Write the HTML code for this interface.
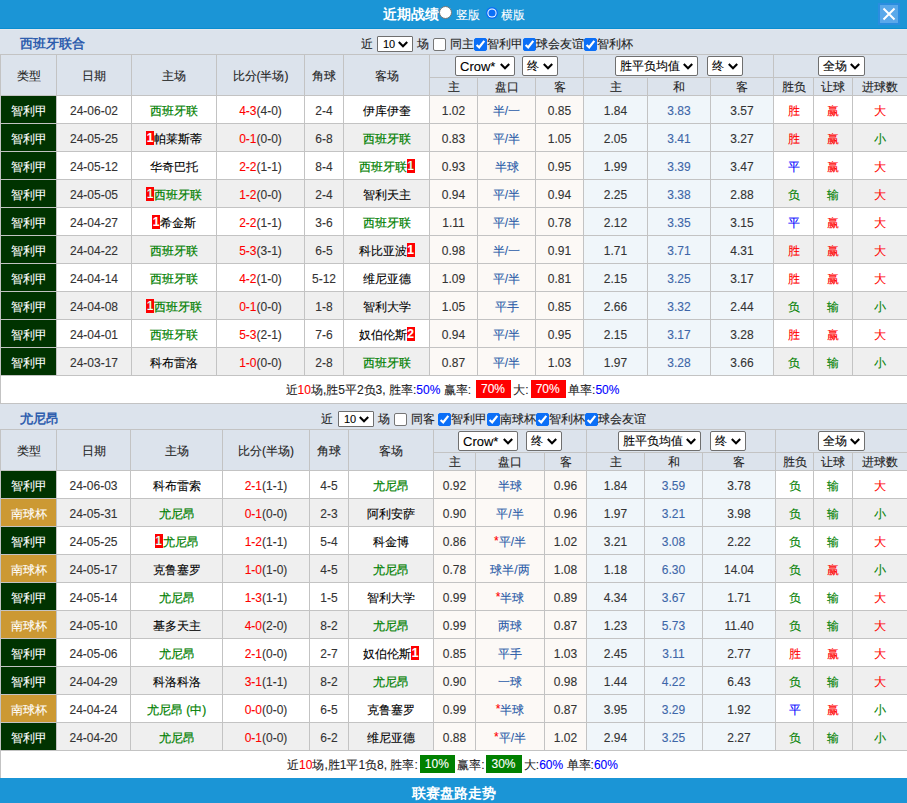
<!DOCTYPE html>
<html><head><meta charset="utf-8"><style>
html,body{margin:0;padding:0;background:#fff;}
body{width:907px;height:803px;overflow:hidden;position:relative;font-family:"Liberation Sans",sans-serif;font-size:12px;color:#000;-webkit-text-stroke:0.1px;}
.r{position:absolute;}
.t{position:absolute;text-align:center;white-space:nowrap;}
.l{position:absolute;white-space:nowrap;}
.sel{position:absolute;background:#fff;border:1px solid #6f6f6f;border-radius:2px;color:#000;}
.cb{position:absolute;width:11px;height:11px;border:1px solid #767676;border-radius:2px;background:#fff;}
.cb.on{background:#0b6ff7;border-color:#0b6ff7;}
.bd{display:inline-block;background:#f00;color:#fff;font-weight:bold;width:8px;height:14px;line-height:14px;text-align:center;vertical-align:middle;margin-top:-2px;position:relative;top:-1px}
.bx{position:relative;top:-1px;display:inline-block;color:#fff;padding:0 6px 0 5px;margin:0 -1px 0 2px;height:18px;line-height:18px;}
</style></head><body>
<div class="r" style="left:0px;top:0px;width:907px;height:28px;background:#1b95d6;"></div>
<div class="r" style="left:0px;top:28px;width:907px;height:1px;background:#0a8dd0;"></div>
<div class="l" style="left:383px;top:0px;height:28px;line-height:28px;color:#fff;font-weight:bold;font-size:14px;-webkit-text-stroke:0">近期战绩</div>
<div class="r" style="left:439px;top:6px;width:11px;height:11px;border-radius:50%;background:#fff;border:1px solid #777"></div>
<div class="l" style="left:456px;top:1px;height:28px;line-height:28px;color:#fff;font-size:12px">竖版</div>
<svg width="14" height="14" viewBox="0 0 14 14" style="position:absolute;left:484.5px;top:5.5px"><circle cx="7" cy="7" r="6" fill="#0b6ff7"/><circle cx="7" cy="7" r="4.6" fill="#fff"/><circle cx="7" cy="7" r="3.6" fill="#0b6ff7"/></svg>
<div class="l" style="left:501px;top:1px;height:28px;line-height:28px;color:#fff;font-size:12px">横版</div>
<div class="r" style="left:878px;top:3px;width:22px;height:22px;background:#2a8de0;"></div>
<div class="r" style="left:880px;top:5px;width:18px;height:18px;background:#5aa8ea;"></div>
<svg width="18" height="18" viewBox="0 0 18 18" style="position:absolute;left:880px;top:5px"><path d="M3.5 3.5 L14.5 14.5 M14.5 3.5 L3.5 14.5" stroke="#fff" stroke-width="2"/></svg>
<div class="r" style="left:0px;top:29px;width:907px;height:25px;background:#dce3ec;"></div>
<div class="l" style="left:20px;top:31px;height:25px;line-height:25px;color:#2f5eae;font-weight:bold;font-size:13px;-webkit-text-stroke:0">西班牙联合</div>
<div class="l" style="left:361px;top:32px;height:25px;line-height:25px;font-size:12px;color:#222">近</div>
<div class="sel" style="left:377px;top:36px;width:34px;height:14px;border-radius:1px"><span style="position:absolute;left:5px;top:0px;line-height:14px;font-size:11px;font-family:"Liberation Serif",serif">10</span><svg width="10" height="7" viewBox="0 0 10 7" style="position:absolute;right:4px;top:4px"><path d="M0.8 1 L5 5.2 L9.2 1" fill="none" stroke="#000" stroke-width="2.1"/></svg></div>
<div class="l" style="left:417px;top:32px;height:25px;line-height:25px;font-size:12px;color:#222">场</div>
<div class="cb" style="left:433px;top:38px"></div>
<div class="l" style="left:450px;top:32px;height:25px;line-height:25px;font-size:12px;color:#222">同主</div>
<div class="cb on" style="left:474px;top:38px"><svg width="13" height="13" viewBox="0 0 13 13" style="position:absolute;left:-1px;top:-1px"><path d="M2.6 7.0 L5.2 9.3 L10.3 2.9" fill="none" stroke="#fff" stroke-width="2.2"/></svg></div>
<div class="l" style="left:487px;top:32px;height:25px;line-height:25px;font-size:12px;color:#222">智利甲</div>
<div class="cb on" style="left:523px;top:38px"><svg width="13" height="13" viewBox="0 0 13 13" style="position:absolute;left:-1px;top:-1px"><path d="M2.6 7.0 L5.2 9.3 L10.3 2.9" fill="none" stroke="#fff" stroke-width="2.2"/></svg></div>
<div class="l" style="left:536px;top:32px;height:25px;line-height:25px;font-size:12px;color:#222">球会友谊</div>
<div class="cb on" style="left:584px;top:38px"><svg width="13" height="13" viewBox="0 0 13 13" style="position:absolute;left:-1px;top:-1px"><path d="M2.6 7.0 L5.2 9.3 L10.3 2.9" fill="none" stroke="#fff" stroke-width="2.2"/></svg></div>
<div class="l" style="left:597px;top:32px;height:25px;line-height:25px;font-size:12px;color:#222">智利杯</div>
<div class="r" style="left:0px;top:54px;width:907px;height:1px;background:#c3c3c3;"></div>
<div class="r" style="left:0px;top:55px;width:907px;height:40px;background:#dce3ec;"></div>
<div class="r" style="left:0px;top:95px;width:907px;height:1px;background:#c3c3c3;"></div>
<div class="r" style="left:0px;top:96px;width:907px;height:27px;background:#fff;"></div>
<div class="r" style="left:430px;top:96px;width:153px;height:27px;background:#fcf9f6;"></div>
<div class="r" style="left:584px;top:96px;width:189px;height:27px;background:#f0f6fa;"></div>
<div class="r" style="left:0px;top:123px;width:907px;height:1px;background:#c3c3c3;"></div>
<div class="r" style="left:0px;top:124px;width:907px;height:27px;background:#efefef;"></div>
<div class="r" style="left:430px;top:124px;width:153px;height:27px;background:#fcf9f6;"></div>
<div class="r" style="left:584px;top:124px;width:189px;height:27px;background:#f0f6fa;"></div>
<div class="r" style="left:0px;top:151px;width:907px;height:1px;background:#c3c3c3;"></div>
<div class="r" style="left:0px;top:152px;width:907px;height:27px;background:#fff;"></div>
<div class="r" style="left:430px;top:152px;width:153px;height:27px;background:#fcf9f6;"></div>
<div class="r" style="left:584px;top:152px;width:189px;height:27px;background:#f0f6fa;"></div>
<div class="r" style="left:0px;top:179px;width:907px;height:1px;background:#c3c3c3;"></div>
<div class="r" style="left:0px;top:180px;width:907px;height:27px;background:#efefef;"></div>
<div class="r" style="left:430px;top:180px;width:153px;height:27px;background:#fcf9f6;"></div>
<div class="r" style="left:584px;top:180px;width:189px;height:27px;background:#f0f6fa;"></div>
<div class="r" style="left:0px;top:207px;width:907px;height:1px;background:#c3c3c3;"></div>
<div class="r" style="left:0px;top:208px;width:907px;height:27px;background:#fff;"></div>
<div class="r" style="left:430px;top:208px;width:153px;height:27px;background:#fcf9f6;"></div>
<div class="r" style="left:584px;top:208px;width:189px;height:27px;background:#f0f6fa;"></div>
<div class="r" style="left:0px;top:235px;width:907px;height:1px;background:#c3c3c3;"></div>
<div class="r" style="left:0px;top:236px;width:907px;height:27px;background:#efefef;"></div>
<div class="r" style="left:430px;top:236px;width:153px;height:27px;background:#fcf9f6;"></div>
<div class="r" style="left:584px;top:236px;width:189px;height:27px;background:#f0f6fa;"></div>
<div class="r" style="left:0px;top:263px;width:907px;height:1px;background:#c3c3c3;"></div>
<div class="r" style="left:0px;top:264px;width:907px;height:27px;background:#fff;"></div>
<div class="r" style="left:430px;top:264px;width:153px;height:27px;background:#fcf9f6;"></div>
<div class="r" style="left:584px;top:264px;width:189px;height:27px;background:#f0f6fa;"></div>
<div class="r" style="left:0px;top:291px;width:907px;height:1px;background:#c3c3c3;"></div>
<div class="r" style="left:0px;top:292px;width:907px;height:27px;background:#efefef;"></div>
<div class="r" style="left:430px;top:292px;width:153px;height:27px;background:#fcf9f6;"></div>
<div class="r" style="left:584px;top:292px;width:189px;height:27px;background:#f0f6fa;"></div>
<div class="r" style="left:0px;top:319px;width:907px;height:1px;background:#c3c3c3;"></div>
<div class="r" style="left:0px;top:320px;width:907px;height:27px;background:#fff;"></div>
<div class="r" style="left:430px;top:320px;width:153px;height:27px;background:#fcf9f6;"></div>
<div class="r" style="left:584px;top:320px;width:189px;height:27px;background:#f0f6fa;"></div>
<div class="r" style="left:0px;top:347px;width:907px;height:1px;background:#c3c3c3;"></div>
<div class="r" style="left:0px;top:348px;width:907px;height:27px;background:#efefef;"></div>
<div class="r" style="left:430px;top:348px;width:153px;height:27px;background:#fcf9f6;"></div>
<div class="r" style="left:584px;top:348px;width:189px;height:27px;background:#f0f6fa;"></div>
<div class="r" style="left:0px;top:375px;width:907px;height:1px;background:#c3c3c3;"></div>
<div class="r" style="left:0px;top:376px;width:907px;height:27px;background:#fff;"></div>
<div class="r" style="left:0px;top:403px;width:907px;height:1px;background:#c3c3c3;"></div>
<div class="r" style="left:0px;top:54px;width:1px;height:349px;background:#c3c3c3;"></div>
<div class="r" style="left:56px;top:55px;width:1px;height:320px;background:#c3c3c3;"></div>
<div class="r" style="left:131px;top:55px;width:1px;height:320px;background:#c3c3c3;"></div>
<div class="r" style="left:216px;top:55px;width:1px;height:320px;background:#c3c3c3;"></div>
<div class="r" style="left:304px;top:55px;width:1px;height:320px;background:#c3c3c3;"></div>
<div class="r" style="left:343px;top:55px;width:1px;height:320px;background:#c3c3c3;"></div>
<div class="r" style="left:429px;top:55px;width:1px;height:320px;background:#c3c3c3;"></div>
<div class="r" style="left:477px;top:77px;width:1px;height:299px;background:#c3c3c3;"></div>
<div class="r" style="left:535px;top:77px;width:1px;height:299px;background:#c3c3c3;"></div>
<div class="r" style="left:583px;top:55px;width:1px;height:320px;background:#c3c3c3;"></div>
<div class="r" style="left:647px;top:77px;width:1px;height:299px;background:#c3c3c3;"></div>
<div class="r" style="left:710px;top:77px;width:1px;height:299px;background:#c3c3c3;"></div>
<div class="r" style="left:773px;top:55px;width:1px;height:320px;background:#c3c3c3;"></div>
<div class="r" style="left:813px;top:77px;width:1px;height:299px;background:#c3c3c3;"></div>
<div class="r" style="left:852px;top:77px;width:1px;height:299px;background:#c3c3c3;"></div>
<div class="r" style="left:429px;top:77px;width:478px;height:1px;background:#c3c3c3;"></div>
<div class="t" style="left:1px;top:56px;width:55px;height:40px;line-height:40px;color:#222">类型</div>
<div class="t" style="left:57px;top:56px;width:74px;height:40px;line-height:40px;color:#222">日期</div>
<div class="t" style="left:132px;top:56px;width:84px;height:40px;line-height:40px;color:#222">主场</div>
<div class="t" style="left:217px;top:56px;width:87px;height:40px;line-height:40px;color:#222">比分(半场)</div>
<div class="t" style="left:305px;top:56px;width:38px;height:40px;line-height:40px;color:#222">角球</div>
<div class="t" style="left:344px;top:56px;width:85px;height:40px;line-height:40px;color:#222">客场</div>
<div class="t" style="left:430px;top:79px;width:47px;height:17px;line-height:17px;color:#222">主</div>
<div class="t" style="left:478px;top:79px;width:57px;height:17px;line-height:17px;color:#222">盘口</div>
<div class="t" style="left:536px;top:79px;width:47px;height:17px;line-height:17px;color:#222">客</div>
<div class="t" style="left:584px;top:79px;width:63px;height:17px;line-height:17px;color:#222">主</div>
<div class="t" style="left:648px;top:79px;width:62px;height:17px;line-height:17px;color:#222">和</div>
<div class="t" style="left:711px;top:79px;width:62px;height:17px;line-height:17px;color:#222">客</div>
<div class="t" style="left:774px;top:79px;width:39px;height:17px;line-height:17px;color:#222">胜负</div>
<div class="t" style="left:814px;top:79px;width:38px;height:17px;line-height:17px;color:#222">让球</div>
<div class="t" style="left:853px;top:79px;width:54px;height:17px;line-height:17px;color:#222">进球数</div>
<div class="sel" style="left:455px;top:56px;width:58px;height:18px;border-radius:2px"><span style="position:absolute;left:4px;top:1px;line-height:18px;font-size:13px;">Crow*</span><svg width="10" height="7" viewBox="0 0 10 7" style="position:absolute;right:4px;top:6px"><path d="M0.8 1 L5 5.2 L9.2 1" fill="none" stroke="#000" stroke-width="2.1"/></svg></div>
<div class="sel" style="left:522px;top:56px;width:34px;height:18px;border-radius:2px"><span style="position:absolute;left:4px;top:0px;line-height:18px;font-size:12px;">终</span><svg width="10" height="7" viewBox="0 0 10 7" style="position:absolute;right:4px;top:6px"><path d="M0.8 1 L5 5.2 L9.2 1" fill="none" stroke="#000" stroke-width="2.1"/></svg></div>
<div class="sel" style="left:615px;top:56px;width:81px;height:18px;border-radius:2px"><span style="position:absolute;left:4px;top:0px;line-height:18px;font-size:12px;">胜平负均值</span><svg width="10" height="7" viewBox="0 0 10 7" style="position:absolute;right:4px;top:6px"><path d="M0.8 1 L5 5.2 L9.2 1" fill="none" stroke="#000" stroke-width="2.1"/></svg></div>
<div class="sel" style="left:707px;top:56px;width:34px;height:18px;border-radius:2px"><span style="position:absolute;left:4px;top:0px;line-height:18px;font-size:12px;">终</span><svg width="10" height="7" viewBox="0 0 10 7" style="position:absolute;right:4px;top:6px"><path d="M0.8 1 L5 5.2 L9.2 1" fill="none" stroke="#000" stroke-width="2.1"/></svg></div>
<div class="sel" style="left:818px;top:56px;width:45px;height:18px;border-radius:2px"><span style="position:absolute;left:4px;top:0px;line-height:18px;font-size:12px;">全场</span><svg width="10" height="7" viewBox="0 0 10 7" style="position:absolute;right:4px;top:6px"><path d="M0.8 1 L5 5.2 L9.2 1" fill="none" stroke="#000" stroke-width="2.1"/></svg></div>
<div class="r" style="left:1px;top:96px;width:55px;height:27px;background:#003300;"></div>
<div class="t" style="left:1px;top:98px;width:55px;height:27px;line-height:27px;color:#fff">智利甲</div>
<div class="t" style="left:57px;top:98px;width:74px;height:27px;line-height:27px;color:#333">24-06-02</div>
<div class="t" style="left:132px;top:98px;width:84px;height:27px;line-height:27px;"><span style="color:#008000;-webkit-text-stroke:0.2px #008000">西班牙联</span></div>
<div class="t" style="left:217px;top:98px;width:87px;height:27px;line-height:27px;color:#333"><span style="color:#ff0000">4-3</span>(4-0)</div>
<div class="t" style="left:305px;top:98px;width:38px;height:27px;line-height:27px;color:#333">2-4</div>
<div class="t" style="left:344px;top:98px;width:85px;height:27px;line-height:27px;"><span style="color:#000">伊库伊奎</span></div>
<div class="t" style="left:430px;top:98px;width:47px;height:27px;line-height:27px;color:#333">1.02</div>
<div class="t" style="left:478px;top:98px;width:57px;height:27px;line-height:27px;color:#2a5ba8">半/一</div>
<div class="t" style="left:536px;top:98px;width:47px;height:27px;line-height:27px;color:#333">0.85</div>
<div class="t" style="left:584px;top:98px;width:63px;height:27px;line-height:27px;color:#333">1.84</div>
<div class="t" style="left:648px;top:98px;width:62px;height:27px;line-height:27px;color:#3d66a8">3.83</div>
<div class="t" style="left:711px;top:98px;width:62px;height:27px;line-height:27px;color:#333">3.57</div>
<div class="t" style="left:774px;top:98px;width:39px;height:27px;line-height:27px;color:#ff0000">胜</div>
<div class="t" style="left:814px;top:98px;width:38px;height:27px;line-height:27px;color:#ff0000">赢</div>
<div class="t" style="left:853px;top:98px;width:54px;height:27px;line-height:27px;color:#ff0000">大</div>
<div class="r" style="left:1px;top:124px;width:55px;height:27px;background:#003300;"></div>
<div class="t" style="left:1px;top:126px;width:55px;height:27px;line-height:27px;color:#fff">智利甲</div>
<div class="t" style="left:57px;top:126px;width:74px;height:27px;line-height:27px;color:#333">24-05-25</div>
<div class="t" style="left:132px;top:126px;width:84px;height:27px;line-height:27px;"><span style="color:#000"><span class="bd">1</span>帕莱斯蒂</span></div>
<div class="t" style="left:217px;top:126px;width:87px;height:27px;line-height:27px;color:#333"><span style="color:#ff0000">0-1</span>(0-0)</div>
<div class="t" style="left:305px;top:126px;width:38px;height:27px;line-height:27px;color:#333">6-8</div>
<div class="t" style="left:344px;top:126px;width:85px;height:27px;line-height:27px;"><span style="color:#008000;-webkit-text-stroke:0.2px #008000">西班牙联</span></div>
<div class="t" style="left:430px;top:126px;width:47px;height:27px;line-height:27px;color:#333">0.83</div>
<div class="t" style="left:478px;top:126px;width:57px;height:27px;line-height:27px;color:#2a5ba8">平/半</div>
<div class="t" style="left:536px;top:126px;width:47px;height:27px;line-height:27px;color:#333">1.05</div>
<div class="t" style="left:584px;top:126px;width:63px;height:27px;line-height:27px;color:#333">2.05</div>
<div class="t" style="left:648px;top:126px;width:62px;height:27px;line-height:27px;color:#3d66a8">3.41</div>
<div class="t" style="left:711px;top:126px;width:62px;height:27px;line-height:27px;color:#333">3.27</div>
<div class="t" style="left:774px;top:126px;width:39px;height:27px;line-height:27px;color:#ff0000">胜</div>
<div class="t" style="left:814px;top:126px;width:38px;height:27px;line-height:27px;color:#ff0000">赢</div>
<div class="t" style="left:853px;top:126px;width:54px;height:27px;line-height:27px;color:#008000">小</div>
<div class="r" style="left:1px;top:152px;width:55px;height:27px;background:#003300;"></div>
<div class="t" style="left:1px;top:154px;width:55px;height:27px;line-height:27px;color:#fff">智利甲</div>
<div class="t" style="left:57px;top:154px;width:74px;height:27px;line-height:27px;color:#333">24-05-12</div>
<div class="t" style="left:132px;top:154px;width:84px;height:27px;line-height:27px;"><span style="color:#000">华奇巴托</span></div>
<div class="t" style="left:217px;top:154px;width:87px;height:27px;line-height:27px;color:#333"><span style="color:#ff0000">2-2</span>(1-1)</div>
<div class="t" style="left:305px;top:154px;width:38px;height:27px;line-height:27px;color:#333">8-4</div>
<div class="t" style="left:344px;top:154px;width:85px;height:27px;line-height:27px;"><span style="color:#008000;-webkit-text-stroke:0.2px #008000">西班牙联<span class="bd">1</span></span></div>
<div class="t" style="left:430px;top:154px;width:47px;height:27px;line-height:27px;color:#333">0.93</div>
<div class="t" style="left:478px;top:154px;width:57px;height:27px;line-height:27px;color:#2a5ba8">半球</div>
<div class="t" style="left:536px;top:154px;width:47px;height:27px;line-height:27px;color:#333">0.95</div>
<div class="t" style="left:584px;top:154px;width:63px;height:27px;line-height:27px;color:#333">1.99</div>
<div class="t" style="left:648px;top:154px;width:62px;height:27px;line-height:27px;color:#3d66a8">3.39</div>
<div class="t" style="left:711px;top:154px;width:62px;height:27px;line-height:27px;color:#333">3.47</div>
<div class="t" style="left:774px;top:154px;width:39px;height:27px;line-height:27px;color:#0000ff">平</div>
<div class="t" style="left:814px;top:154px;width:38px;height:27px;line-height:27px;color:#ff0000">赢</div>
<div class="t" style="left:853px;top:154px;width:54px;height:27px;line-height:27px;color:#ff0000">大</div>
<div class="r" style="left:1px;top:180px;width:55px;height:27px;background:#003300;"></div>
<div class="t" style="left:1px;top:182px;width:55px;height:27px;line-height:27px;color:#fff">智利甲</div>
<div class="t" style="left:57px;top:182px;width:74px;height:27px;line-height:27px;color:#333">24-05-05</div>
<div class="t" style="left:132px;top:182px;width:84px;height:27px;line-height:27px;"><span style="color:#008000;-webkit-text-stroke:0.2px #008000"><span class="bd">1</span>西班牙联</span></div>
<div class="t" style="left:217px;top:182px;width:87px;height:27px;line-height:27px;color:#333"><span style="color:#ff0000">1-2</span>(0-0)</div>
<div class="t" style="left:305px;top:182px;width:38px;height:27px;line-height:27px;color:#333">2-4</div>
<div class="t" style="left:344px;top:182px;width:85px;height:27px;line-height:27px;"><span style="color:#000">智利天主</span></div>
<div class="t" style="left:430px;top:182px;width:47px;height:27px;line-height:27px;color:#333">0.94</div>
<div class="t" style="left:478px;top:182px;width:57px;height:27px;line-height:27px;color:#2a5ba8">平/半</div>
<div class="t" style="left:536px;top:182px;width:47px;height:27px;line-height:27px;color:#333">0.94</div>
<div class="t" style="left:584px;top:182px;width:63px;height:27px;line-height:27px;color:#333">2.25</div>
<div class="t" style="left:648px;top:182px;width:62px;height:27px;line-height:27px;color:#3d66a8">3.38</div>
<div class="t" style="left:711px;top:182px;width:62px;height:27px;line-height:27px;color:#333">2.88</div>
<div class="t" style="left:774px;top:182px;width:39px;height:27px;line-height:27px;color:#008000">负</div>
<div class="t" style="left:814px;top:182px;width:38px;height:27px;line-height:27px;color:#008000">输</div>
<div class="t" style="left:853px;top:182px;width:54px;height:27px;line-height:27px;color:#ff0000">大</div>
<div class="r" style="left:1px;top:208px;width:55px;height:27px;background:#003300;"></div>
<div class="t" style="left:1px;top:210px;width:55px;height:27px;line-height:27px;color:#fff">智利甲</div>
<div class="t" style="left:57px;top:210px;width:74px;height:27px;line-height:27px;color:#333">24-04-27</div>
<div class="t" style="left:132px;top:210px;width:84px;height:27px;line-height:27px;"><span style="color:#000"><span class="bd">1</span>希金斯</span></div>
<div class="t" style="left:217px;top:210px;width:87px;height:27px;line-height:27px;color:#333"><span style="color:#ff0000">2-2</span>(1-1)</div>
<div class="t" style="left:305px;top:210px;width:38px;height:27px;line-height:27px;color:#333">3-6</div>
<div class="t" style="left:344px;top:210px;width:85px;height:27px;line-height:27px;"><span style="color:#008000;-webkit-text-stroke:0.2px #008000">西班牙联</span></div>
<div class="t" style="left:430px;top:210px;width:47px;height:27px;line-height:27px;color:#333">1.11</div>
<div class="t" style="left:478px;top:210px;width:57px;height:27px;line-height:27px;color:#2a5ba8">平/半</div>
<div class="t" style="left:536px;top:210px;width:47px;height:27px;line-height:27px;color:#333">0.78</div>
<div class="t" style="left:584px;top:210px;width:63px;height:27px;line-height:27px;color:#333">2.12</div>
<div class="t" style="left:648px;top:210px;width:62px;height:27px;line-height:27px;color:#3d66a8">3.35</div>
<div class="t" style="left:711px;top:210px;width:62px;height:27px;line-height:27px;color:#333">3.15</div>
<div class="t" style="left:774px;top:210px;width:39px;height:27px;line-height:27px;color:#0000ff">平</div>
<div class="t" style="left:814px;top:210px;width:38px;height:27px;line-height:27px;color:#ff0000">赢</div>
<div class="t" style="left:853px;top:210px;width:54px;height:27px;line-height:27px;color:#ff0000">大</div>
<div class="r" style="left:1px;top:236px;width:55px;height:27px;background:#003300;"></div>
<div class="t" style="left:1px;top:238px;width:55px;height:27px;line-height:27px;color:#fff">智利甲</div>
<div class="t" style="left:57px;top:238px;width:74px;height:27px;line-height:27px;color:#333">24-04-22</div>
<div class="t" style="left:132px;top:238px;width:84px;height:27px;line-height:27px;"><span style="color:#008000;-webkit-text-stroke:0.2px #008000">西班牙联</span></div>
<div class="t" style="left:217px;top:238px;width:87px;height:27px;line-height:27px;color:#333"><span style="color:#ff0000">5-3</span>(3-1)</div>
<div class="t" style="left:305px;top:238px;width:38px;height:27px;line-height:27px;color:#333">6-5</div>
<div class="t" style="left:344px;top:238px;width:85px;height:27px;line-height:27px;"><span style="color:#000">科比亚波<span class="bd">1</span></span></div>
<div class="t" style="left:430px;top:238px;width:47px;height:27px;line-height:27px;color:#333">0.98</div>
<div class="t" style="left:478px;top:238px;width:57px;height:27px;line-height:27px;color:#2a5ba8">半/一</div>
<div class="t" style="left:536px;top:238px;width:47px;height:27px;line-height:27px;color:#333">0.91</div>
<div class="t" style="left:584px;top:238px;width:63px;height:27px;line-height:27px;color:#333">1.71</div>
<div class="t" style="left:648px;top:238px;width:62px;height:27px;line-height:27px;color:#3d66a8">3.71</div>
<div class="t" style="left:711px;top:238px;width:62px;height:27px;line-height:27px;color:#333">4.31</div>
<div class="t" style="left:774px;top:238px;width:39px;height:27px;line-height:27px;color:#ff0000">胜</div>
<div class="t" style="left:814px;top:238px;width:38px;height:27px;line-height:27px;color:#ff0000">赢</div>
<div class="t" style="left:853px;top:238px;width:54px;height:27px;line-height:27px;color:#ff0000">大</div>
<div class="r" style="left:1px;top:264px;width:55px;height:27px;background:#003300;"></div>
<div class="t" style="left:1px;top:266px;width:55px;height:27px;line-height:27px;color:#fff">智利甲</div>
<div class="t" style="left:57px;top:266px;width:74px;height:27px;line-height:27px;color:#333">24-04-14</div>
<div class="t" style="left:132px;top:266px;width:84px;height:27px;line-height:27px;"><span style="color:#008000;-webkit-text-stroke:0.2px #008000">西班牙联</span></div>
<div class="t" style="left:217px;top:266px;width:87px;height:27px;line-height:27px;color:#333"><span style="color:#ff0000">4-2</span>(1-0)</div>
<div class="t" style="left:305px;top:266px;width:38px;height:27px;line-height:27px;color:#333">5-12</div>
<div class="t" style="left:344px;top:266px;width:85px;height:27px;line-height:27px;"><span style="color:#000">维尼亚德</span></div>
<div class="t" style="left:430px;top:266px;width:47px;height:27px;line-height:27px;color:#333">1.09</div>
<div class="t" style="left:478px;top:266px;width:57px;height:27px;line-height:27px;color:#2a5ba8">平/半</div>
<div class="t" style="left:536px;top:266px;width:47px;height:27px;line-height:27px;color:#333">0.81</div>
<div class="t" style="left:584px;top:266px;width:63px;height:27px;line-height:27px;color:#333">2.15</div>
<div class="t" style="left:648px;top:266px;width:62px;height:27px;line-height:27px;color:#3d66a8">3.25</div>
<div class="t" style="left:711px;top:266px;width:62px;height:27px;line-height:27px;color:#333">3.17</div>
<div class="t" style="left:774px;top:266px;width:39px;height:27px;line-height:27px;color:#ff0000">胜</div>
<div class="t" style="left:814px;top:266px;width:38px;height:27px;line-height:27px;color:#ff0000">赢</div>
<div class="t" style="left:853px;top:266px;width:54px;height:27px;line-height:27px;color:#ff0000">大</div>
<div class="r" style="left:1px;top:292px;width:55px;height:27px;background:#003300;"></div>
<div class="t" style="left:1px;top:294px;width:55px;height:27px;line-height:27px;color:#fff">智利甲</div>
<div class="t" style="left:57px;top:294px;width:74px;height:27px;line-height:27px;color:#333">24-04-08</div>
<div class="t" style="left:132px;top:294px;width:84px;height:27px;line-height:27px;"><span style="color:#008000;-webkit-text-stroke:0.2px #008000"><span class="bd">1</span>西班牙联</span></div>
<div class="t" style="left:217px;top:294px;width:87px;height:27px;line-height:27px;color:#333"><span style="color:#ff0000">0-1</span>(0-0)</div>
<div class="t" style="left:305px;top:294px;width:38px;height:27px;line-height:27px;color:#333">1-8</div>
<div class="t" style="left:344px;top:294px;width:85px;height:27px;line-height:27px;"><span style="color:#000">智利大学</span></div>
<div class="t" style="left:430px;top:294px;width:47px;height:27px;line-height:27px;color:#333">1.05</div>
<div class="t" style="left:478px;top:294px;width:57px;height:27px;line-height:27px;color:#2a5ba8">平手</div>
<div class="t" style="left:536px;top:294px;width:47px;height:27px;line-height:27px;color:#333">0.85</div>
<div class="t" style="left:584px;top:294px;width:63px;height:27px;line-height:27px;color:#333">2.66</div>
<div class="t" style="left:648px;top:294px;width:62px;height:27px;line-height:27px;color:#3d66a8">3.32</div>
<div class="t" style="left:711px;top:294px;width:62px;height:27px;line-height:27px;color:#333">2.44</div>
<div class="t" style="left:774px;top:294px;width:39px;height:27px;line-height:27px;color:#008000">负</div>
<div class="t" style="left:814px;top:294px;width:38px;height:27px;line-height:27px;color:#008000">输</div>
<div class="t" style="left:853px;top:294px;width:54px;height:27px;line-height:27px;color:#008000">小</div>
<div class="r" style="left:1px;top:320px;width:55px;height:27px;background:#003300;"></div>
<div class="t" style="left:1px;top:322px;width:55px;height:27px;line-height:27px;color:#fff">智利甲</div>
<div class="t" style="left:57px;top:322px;width:74px;height:27px;line-height:27px;color:#333">24-04-01</div>
<div class="t" style="left:132px;top:322px;width:84px;height:27px;line-height:27px;"><span style="color:#008000;-webkit-text-stroke:0.2px #008000">西班牙联</span></div>
<div class="t" style="left:217px;top:322px;width:87px;height:27px;line-height:27px;color:#333"><span style="color:#ff0000">5-3</span>(2-1)</div>
<div class="t" style="left:305px;top:322px;width:38px;height:27px;line-height:27px;color:#333">7-6</div>
<div class="t" style="left:344px;top:322px;width:85px;height:27px;line-height:27px;"><span style="color:#000">奴伯伦斯<span class="bd">2</span></span></div>
<div class="t" style="left:430px;top:322px;width:47px;height:27px;line-height:27px;color:#333">0.94</div>
<div class="t" style="left:478px;top:322px;width:57px;height:27px;line-height:27px;color:#2a5ba8">平/半</div>
<div class="t" style="left:536px;top:322px;width:47px;height:27px;line-height:27px;color:#333">0.95</div>
<div class="t" style="left:584px;top:322px;width:63px;height:27px;line-height:27px;color:#333">2.15</div>
<div class="t" style="left:648px;top:322px;width:62px;height:27px;line-height:27px;color:#3d66a8">3.17</div>
<div class="t" style="left:711px;top:322px;width:62px;height:27px;line-height:27px;color:#333">3.28</div>
<div class="t" style="left:774px;top:322px;width:39px;height:27px;line-height:27px;color:#ff0000">胜</div>
<div class="t" style="left:814px;top:322px;width:38px;height:27px;line-height:27px;color:#ff0000">赢</div>
<div class="t" style="left:853px;top:322px;width:54px;height:27px;line-height:27px;color:#ff0000">大</div>
<div class="r" style="left:1px;top:348px;width:55px;height:27px;background:#003300;"></div>
<div class="t" style="left:1px;top:350px;width:55px;height:27px;line-height:27px;color:#fff">智利甲</div>
<div class="t" style="left:57px;top:350px;width:74px;height:27px;line-height:27px;color:#333">24-03-17</div>
<div class="t" style="left:132px;top:350px;width:84px;height:27px;line-height:27px;"><span style="color:#000">科布雷洛</span></div>
<div class="t" style="left:217px;top:350px;width:87px;height:27px;line-height:27px;color:#333"><span style="color:#ff0000">1-0</span>(0-0)</div>
<div class="t" style="left:305px;top:350px;width:38px;height:27px;line-height:27px;color:#333">2-8</div>
<div class="t" style="left:344px;top:350px;width:85px;height:27px;line-height:27px;"><span style="color:#008000;-webkit-text-stroke:0.2px #008000">西班牙联</span></div>
<div class="t" style="left:430px;top:350px;width:47px;height:27px;line-height:27px;color:#333">0.87</div>
<div class="t" style="left:478px;top:350px;width:57px;height:27px;line-height:27px;color:#2a5ba8">平/半</div>
<div class="t" style="left:536px;top:350px;width:47px;height:27px;line-height:27px;color:#333">1.03</div>
<div class="t" style="left:584px;top:350px;width:63px;height:27px;line-height:27px;color:#333">1.97</div>
<div class="t" style="left:648px;top:350px;width:62px;height:27px;line-height:27px;color:#3d66a8">3.28</div>
<div class="t" style="left:711px;top:350px;width:62px;height:27px;line-height:27px;color:#333">3.66</div>
<div class="t" style="left:774px;top:350px;width:39px;height:27px;line-height:27px;color:#008000">负</div>
<div class="t" style="left:814px;top:350px;width:38px;height:27px;line-height:27px;color:#008000">输</div>
<div class="t" style="left:853px;top:350px;width:54px;height:27px;line-height:27px;color:#008000">小</div>
<div class="t" style="left:-1px;top:377px;width:907px;height:27px;line-height:27px;color:#222">近<span style="color:#f00">10</span>场,胜5平2负3, 胜率:<span style="color:#00f">50%</span> 赢率:<span class="bx" style="background:#f00;margin-left:5px">70%</span> 大:<span class="bx" style="background:#f00;margin-left:2px">70%</span> 单率:<span style="color:#00f">50%</span></div>
<div class="r" style="left:0px;top:29px;width:907px;height:1px;background:#e5e8ed;"></div>
<div class="r" style="left:0px;top:404px;width:907px;height:25px;background:#dce3ec;"></div>
<div class="l" style="left:20px;top:406px;height:25px;line-height:25px;color:#2f5eae;font-weight:bold;font-size:13px;-webkit-text-stroke:0">尤尼昂</div>
<div class="l" style="left:321px;top:407px;height:25px;line-height:25px;font-size:12px;color:#222">近</div>
<div class="sel" style="left:338px;top:411px;width:34px;height:14px;border-radius:1px"><span style="position:absolute;left:5px;top:0px;line-height:14px;font-size:11px;font-family:"Liberation Serif",serif">10</span><svg width="10" height="7" viewBox="0 0 10 7" style="position:absolute;right:4px;top:4px"><path d="M0.8 1 L5 5.2 L9.2 1" fill="none" stroke="#000" stroke-width="2.1"/></svg></div>
<div class="l" style="left:378px;top:407px;height:25px;line-height:25px;font-size:12px;color:#222">场</div>
<div class="cb" style="left:394px;top:413px"></div>
<div class="l" style="left:411px;top:407px;height:25px;line-height:25px;font-size:12px;color:#222">同客</div>
<div class="cb on" style="left:438px;top:413px"><svg width="13" height="13" viewBox="0 0 13 13" style="position:absolute;left:-1px;top:-1px"><path d="M2.6 7.0 L5.2 9.3 L10.3 2.9" fill="none" stroke="#fff" stroke-width="2.2"/></svg></div>
<div class="l" style="left:451px;top:407px;height:25px;line-height:25px;font-size:12px;color:#222">智利甲</div>
<div class="cb on" style="left:487px;top:413px"><svg width="13" height="13" viewBox="0 0 13 13" style="position:absolute;left:-1px;top:-1px"><path d="M2.6 7.0 L5.2 9.3 L10.3 2.9" fill="none" stroke="#fff" stroke-width="2.2"/></svg></div>
<div class="l" style="left:500px;top:407px;height:25px;line-height:25px;font-size:12px;color:#222">南球杯</div>
<div class="cb on" style="left:536px;top:413px"><svg width="13" height="13" viewBox="0 0 13 13" style="position:absolute;left:-1px;top:-1px"><path d="M2.6 7.0 L5.2 9.3 L10.3 2.9" fill="none" stroke="#fff" stroke-width="2.2"/></svg></div>
<div class="l" style="left:549px;top:407px;height:25px;line-height:25px;font-size:12px;color:#222">智利杯</div>
<div class="cb on" style="left:585px;top:413px"><svg width="13" height="13" viewBox="0 0 13 13" style="position:absolute;left:-1px;top:-1px"><path d="M2.6 7.0 L5.2 9.3 L10.3 2.9" fill="none" stroke="#fff" stroke-width="2.2"/></svg></div>
<div class="l" style="left:598px;top:407px;height:25px;line-height:25px;font-size:12px;color:#222">球会友谊</div>
<div class="r" style="left:0px;top:429px;width:907px;height:1px;background:#c3c3c3;"></div>
<div class="r" style="left:0px;top:430px;width:907px;height:40px;background:#dce3ec;"></div>
<div class="r" style="left:0px;top:470px;width:907px;height:1px;background:#c3c3c3;"></div>
<div class="r" style="left:0px;top:471px;width:907px;height:27px;background:#fff;"></div>
<div class="r" style="left:434px;top:471px;width:152px;height:27px;background:#fcf9f6;"></div>
<div class="r" style="left:587px;top:471px;width:188px;height:27px;background:#f0f6fa;"></div>
<div class="r" style="left:0px;top:498px;width:907px;height:1px;background:#c3c3c3;"></div>
<div class="r" style="left:0px;top:499px;width:907px;height:27px;background:#efefef;"></div>
<div class="r" style="left:434px;top:499px;width:152px;height:27px;background:#fcf9f6;"></div>
<div class="r" style="left:587px;top:499px;width:188px;height:27px;background:#f0f6fa;"></div>
<div class="r" style="left:0px;top:526px;width:907px;height:1px;background:#c3c3c3;"></div>
<div class="r" style="left:0px;top:527px;width:907px;height:27px;background:#fff;"></div>
<div class="r" style="left:434px;top:527px;width:152px;height:27px;background:#fcf9f6;"></div>
<div class="r" style="left:587px;top:527px;width:188px;height:27px;background:#f0f6fa;"></div>
<div class="r" style="left:0px;top:554px;width:907px;height:1px;background:#c3c3c3;"></div>
<div class="r" style="left:0px;top:555px;width:907px;height:27px;background:#efefef;"></div>
<div class="r" style="left:434px;top:555px;width:152px;height:27px;background:#fcf9f6;"></div>
<div class="r" style="left:587px;top:555px;width:188px;height:27px;background:#f0f6fa;"></div>
<div class="r" style="left:0px;top:582px;width:907px;height:1px;background:#c3c3c3;"></div>
<div class="r" style="left:0px;top:583px;width:907px;height:27px;background:#fff;"></div>
<div class="r" style="left:434px;top:583px;width:152px;height:27px;background:#fcf9f6;"></div>
<div class="r" style="left:587px;top:583px;width:188px;height:27px;background:#f0f6fa;"></div>
<div class="r" style="left:0px;top:610px;width:907px;height:1px;background:#c3c3c3;"></div>
<div class="r" style="left:0px;top:611px;width:907px;height:27px;background:#efefef;"></div>
<div class="r" style="left:434px;top:611px;width:152px;height:27px;background:#fcf9f6;"></div>
<div class="r" style="left:587px;top:611px;width:188px;height:27px;background:#f0f6fa;"></div>
<div class="r" style="left:0px;top:638px;width:907px;height:1px;background:#c3c3c3;"></div>
<div class="r" style="left:0px;top:639px;width:907px;height:27px;background:#fff;"></div>
<div class="r" style="left:434px;top:639px;width:152px;height:27px;background:#fcf9f6;"></div>
<div class="r" style="left:587px;top:639px;width:188px;height:27px;background:#f0f6fa;"></div>
<div class="r" style="left:0px;top:666px;width:907px;height:1px;background:#c3c3c3;"></div>
<div class="r" style="left:0px;top:667px;width:907px;height:27px;background:#efefef;"></div>
<div class="r" style="left:434px;top:667px;width:152px;height:27px;background:#fcf9f6;"></div>
<div class="r" style="left:587px;top:667px;width:188px;height:27px;background:#f0f6fa;"></div>
<div class="r" style="left:0px;top:694px;width:907px;height:1px;background:#c3c3c3;"></div>
<div class="r" style="left:0px;top:695px;width:907px;height:27px;background:#fff;"></div>
<div class="r" style="left:434px;top:695px;width:152px;height:27px;background:#fcf9f6;"></div>
<div class="r" style="left:587px;top:695px;width:188px;height:27px;background:#f0f6fa;"></div>
<div class="r" style="left:0px;top:722px;width:907px;height:1px;background:#c3c3c3;"></div>
<div class="r" style="left:0px;top:723px;width:907px;height:27px;background:#efefef;"></div>
<div class="r" style="left:434px;top:723px;width:152px;height:27px;background:#fcf9f6;"></div>
<div class="r" style="left:587px;top:723px;width:188px;height:27px;background:#f0f6fa;"></div>
<div class="r" style="left:0px;top:750px;width:907px;height:1px;background:#c3c3c3;"></div>
<div class="r" style="left:0px;top:751px;width:907px;height:27px;background:#fff;"></div>
<div class="r" style="left:0px;top:778px;width:907px;height:1px;background:#c3c3c3;"></div>
<div class="r" style="left:0px;top:429px;width:1px;height:349px;background:#c3c3c3;"></div>
<div class="r" style="left:56px;top:430px;width:1px;height:320px;background:#c3c3c3;"></div>
<div class="r" style="left:130px;top:430px;width:1px;height:320px;background:#c3c3c3;"></div>
<div class="r" style="left:222px;top:430px;width:1px;height:320px;background:#c3c3c3;"></div>
<div class="r" style="left:309px;top:430px;width:1px;height:320px;background:#c3c3c3;"></div>
<div class="r" style="left:348px;top:430px;width:1px;height:320px;background:#c3c3c3;"></div>
<div class="r" style="left:433px;top:430px;width:1px;height:320px;background:#c3c3c3;"></div>
<div class="r" style="left:475px;top:452px;width:1px;height:299px;background:#c3c3c3;"></div>
<div class="r" style="left:544px;top:452px;width:1px;height:299px;background:#c3c3c3;"></div>
<div class="r" style="left:586px;top:430px;width:1px;height:320px;background:#c3c3c3;"></div>
<div class="r" style="left:644px;top:452px;width:1px;height:299px;background:#c3c3c3;"></div>
<div class="r" style="left:702px;top:452px;width:1px;height:299px;background:#c3c3c3;"></div>
<div class="r" style="left:775px;top:430px;width:1px;height:320px;background:#c3c3c3;"></div>
<div class="r" style="left:813px;top:452px;width:1px;height:299px;background:#c3c3c3;"></div>
<div class="r" style="left:852px;top:452px;width:1px;height:299px;background:#c3c3c3;"></div>
<div class="r" style="left:433px;top:452px;width:474px;height:1px;background:#c3c3c3;"></div>
<div class="t" style="left:1px;top:431px;width:55px;height:40px;line-height:40px;color:#222">类型</div>
<div class="t" style="left:57px;top:431px;width:73px;height:40px;line-height:40px;color:#222">日期</div>
<div class="t" style="left:131px;top:431px;width:91px;height:40px;line-height:40px;color:#222">主场</div>
<div class="t" style="left:223px;top:431px;width:86px;height:40px;line-height:40px;color:#222">比分(半场)</div>
<div class="t" style="left:310px;top:431px;width:38px;height:40px;line-height:40px;color:#222">角球</div>
<div class="t" style="left:349px;top:431px;width:84px;height:40px;line-height:40px;color:#222">客场</div>
<div class="t" style="left:434px;top:454px;width:41px;height:17px;line-height:17px;color:#222">主</div>
<div class="t" style="left:476px;top:454px;width:68px;height:17px;line-height:17px;color:#222">盘口</div>
<div class="t" style="left:545px;top:454px;width:41px;height:17px;line-height:17px;color:#222">客</div>
<div class="t" style="left:587px;top:454px;width:57px;height:17px;line-height:17px;color:#222">主</div>
<div class="t" style="left:645px;top:454px;width:57px;height:17px;line-height:17px;color:#222">和</div>
<div class="t" style="left:703px;top:454px;width:72px;height:17px;line-height:17px;color:#222">客</div>
<div class="t" style="left:776px;top:454px;width:37px;height:17px;line-height:17px;color:#222">胜负</div>
<div class="t" style="left:814px;top:454px;width:38px;height:17px;line-height:17px;color:#222">让球</div>
<div class="t" style="left:853px;top:454px;width:54px;height:17px;line-height:17px;color:#222">进球数</div>
<div class="sel" style="left:458px;top:431px;width:58px;height:18px;border-radius:2px"><span style="position:absolute;left:4px;top:1px;line-height:18px;font-size:13px;">Crow*</span><svg width="10" height="7" viewBox="0 0 10 7" style="position:absolute;right:4px;top:6px"><path d="M0.8 1 L5 5.2 L9.2 1" fill="none" stroke="#000" stroke-width="2.1"/></svg></div>
<div class="sel" style="left:526px;top:431px;width:34px;height:18px;border-radius:2px"><span style="position:absolute;left:4px;top:0px;line-height:18px;font-size:12px;">终</span><svg width="10" height="7" viewBox="0 0 10 7" style="position:absolute;right:4px;top:6px"><path d="M0.8 1 L5 5.2 L9.2 1" fill="none" stroke="#000" stroke-width="2.1"/></svg></div>
<div class="sel" style="left:618px;top:431px;width:81px;height:18px;border-radius:2px"><span style="position:absolute;left:4px;top:0px;line-height:18px;font-size:12px;">胜平负均值</span><svg width="10" height="7" viewBox="0 0 10 7" style="position:absolute;right:4px;top:6px"><path d="M0.8 1 L5 5.2 L9.2 1" fill="none" stroke="#000" stroke-width="2.1"/></svg></div>
<div class="sel" style="left:710px;top:431px;width:34px;height:18px;border-radius:2px"><span style="position:absolute;left:4px;top:0px;line-height:18px;font-size:12px;">终</span><svg width="10" height="7" viewBox="0 0 10 7" style="position:absolute;right:4px;top:6px"><path d="M0.8 1 L5 5.2 L9.2 1" fill="none" stroke="#000" stroke-width="2.1"/></svg></div>
<div class="sel" style="left:818px;top:431px;width:45px;height:18px;border-radius:2px"><span style="position:absolute;left:4px;top:0px;line-height:18px;font-size:12px;">全场</span><svg width="10" height="7" viewBox="0 0 10 7" style="position:absolute;right:4px;top:6px"><path d="M0.8 1 L5 5.2 L9.2 1" fill="none" stroke="#000" stroke-width="2.1"/></svg></div>
<div class="r" style="left:1px;top:471px;width:55px;height:27px;background:#003300;"></div>
<div class="t" style="left:1px;top:473px;width:55px;height:27px;line-height:27px;color:#fff">智利甲</div>
<div class="t" style="left:57px;top:473px;width:73px;height:27px;line-height:27px;color:#333">24-06-03</div>
<div class="t" style="left:131px;top:473px;width:91px;height:27px;line-height:27px;"><span style="color:#000">科布雷索</span></div>
<div class="t" style="left:223px;top:473px;width:86px;height:27px;line-height:27px;color:#333"><span style="color:#ff0000">2-1</span>(1-1)</div>
<div class="t" style="left:310px;top:473px;width:38px;height:27px;line-height:27px;color:#333">4-5</div>
<div class="t" style="left:349px;top:473px;width:84px;height:27px;line-height:27px;"><span style="color:#008000;-webkit-text-stroke:0.2px #008000">尤尼昂</span></div>
<div class="t" style="left:434px;top:473px;width:41px;height:27px;line-height:27px;color:#333">0.92</div>
<div class="t" style="left:476px;top:473px;width:68px;height:27px;line-height:27px;color:#2a5ba8">半球</div>
<div class="t" style="left:545px;top:473px;width:41px;height:27px;line-height:27px;color:#333">0.96</div>
<div class="t" style="left:587px;top:473px;width:57px;height:27px;line-height:27px;color:#333">1.84</div>
<div class="t" style="left:645px;top:473px;width:57px;height:27px;line-height:27px;color:#3d66a8">3.59</div>
<div class="t" style="left:703px;top:473px;width:72px;height:27px;line-height:27px;color:#333">3.78</div>
<div class="t" style="left:776px;top:473px;width:37px;height:27px;line-height:27px;color:#008000">负</div>
<div class="t" style="left:814px;top:473px;width:38px;height:27px;line-height:27px;color:#008000">输</div>
<div class="t" style="left:853px;top:473px;width:54px;height:27px;line-height:27px;color:#ff0000">大</div>
<div class="r" style="left:1px;top:499px;width:55px;height:27px;background:#cc9933;"></div>
<div class="t" style="left:1px;top:501px;width:55px;height:27px;line-height:27px;color:#fff">南球杯</div>
<div class="t" style="left:57px;top:501px;width:73px;height:27px;line-height:27px;color:#333">24-05-31</div>
<div class="t" style="left:131px;top:501px;width:91px;height:27px;line-height:27px;"><span style="color:#008000;-webkit-text-stroke:0.2px #008000">尤尼昂</span></div>
<div class="t" style="left:223px;top:501px;width:86px;height:27px;line-height:27px;color:#333"><span style="color:#ff0000">0-1</span>(0-0)</div>
<div class="t" style="left:310px;top:501px;width:38px;height:27px;line-height:27px;color:#333">2-3</div>
<div class="t" style="left:349px;top:501px;width:84px;height:27px;line-height:27px;"><span style="color:#000">阿利安萨</span></div>
<div class="t" style="left:434px;top:501px;width:41px;height:27px;line-height:27px;color:#333">0.90</div>
<div class="t" style="left:476px;top:501px;width:68px;height:27px;line-height:27px;color:#2a5ba8">平/半</div>
<div class="t" style="left:545px;top:501px;width:41px;height:27px;line-height:27px;color:#333">0.96</div>
<div class="t" style="left:587px;top:501px;width:57px;height:27px;line-height:27px;color:#333">1.97</div>
<div class="t" style="left:645px;top:501px;width:57px;height:27px;line-height:27px;color:#3d66a8">3.21</div>
<div class="t" style="left:703px;top:501px;width:72px;height:27px;line-height:27px;color:#333">3.98</div>
<div class="t" style="left:776px;top:501px;width:37px;height:27px;line-height:27px;color:#008000">负</div>
<div class="t" style="left:814px;top:501px;width:38px;height:27px;line-height:27px;color:#008000">输</div>
<div class="t" style="left:853px;top:501px;width:54px;height:27px;line-height:27px;color:#008000">小</div>
<div class="r" style="left:1px;top:527px;width:55px;height:27px;background:#003300;"></div>
<div class="t" style="left:1px;top:529px;width:55px;height:27px;line-height:27px;color:#fff">智利甲</div>
<div class="t" style="left:57px;top:529px;width:73px;height:27px;line-height:27px;color:#333">24-05-25</div>
<div class="t" style="left:131px;top:529px;width:91px;height:27px;line-height:27px;"><span style="color:#008000;-webkit-text-stroke:0.2px #008000"><span class="bd">1</span>尤尼昂</span></div>
<div class="t" style="left:223px;top:529px;width:86px;height:27px;line-height:27px;color:#333"><span style="color:#ff0000">1-2</span>(1-1)</div>
<div class="t" style="left:310px;top:529px;width:38px;height:27px;line-height:27px;color:#333">5-4</div>
<div class="t" style="left:349px;top:529px;width:84px;height:27px;line-height:27px;"><span style="color:#000">科金博</span></div>
<div class="t" style="left:434px;top:529px;width:41px;height:27px;line-height:27px;color:#333">0.86</div>
<div class="t" style="left:476px;top:529px;width:68px;height:27px;line-height:27px;color:#2a5ba8"><span style="color:#f00;position:relative;top:-1px">*</span>平/半</div>
<div class="t" style="left:545px;top:529px;width:41px;height:27px;line-height:27px;color:#333">1.02</div>
<div class="t" style="left:587px;top:529px;width:57px;height:27px;line-height:27px;color:#333">3.21</div>
<div class="t" style="left:645px;top:529px;width:57px;height:27px;line-height:27px;color:#3d66a8">3.08</div>
<div class="t" style="left:703px;top:529px;width:72px;height:27px;line-height:27px;color:#333">2.22</div>
<div class="t" style="left:776px;top:529px;width:37px;height:27px;line-height:27px;color:#008000">负</div>
<div class="t" style="left:814px;top:529px;width:38px;height:27px;line-height:27px;color:#008000">输</div>
<div class="t" style="left:853px;top:529px;width:54px;height:27px;line-height:27px;color:#ff0000">大</div>
<div class="r" style="left:1px;top:555px;width:55px;height:27px;background:#cc9933;"></div>
<div class="t" style="left:1px;top:557px;width:55px;height:27px;line-height:27px;color:#fff">南球杯</div>
<div class="t" style="left:57px;top:557px;width:73px;height:27px;line-height:27px;color:#333">24-05-17</div>
<div class="t" style="left:131px;top:557px;width:91px;height:27px;line-height:27px;"><span style="color:#000">克鲁塞罗</span></div>
<div class="t" style="left:223px;top:557px;width:86px;height:27px;line-height:27px;color:#333"><span style="color:#ff0000">1-0</span>(1-0)</div>
<div class="t" style="left:310px;top:557px;width:38px;height:27px;line-height:27px;color:#333">4-5</div>
<div class="t" style="left:349px;top:557px;width:84px;height:27px;line-height:27px;"><span style="color:#008000;-webkit-text-stroke:0.2px #008000">尤尼昂</span></div>
<div class="t" style="left:434px;top:557px;width:41px;height:27px;line-height:27px;color:#333">0.78</div>
<div class="t" style="left:476px;top:557px;width:68px;height:27px;line-height:27px;color:#2a5ba8">球半/两</div>
<div class="t" style="left:545px;top:557px;width:41px;height:27px;line-height:27px;color:#333">1.08</div>
<div class="t" style="left:587px;top:557px;width:57px;height:27px;line-height:27px;color:#333">1.18</div>
<div class="t" style="left:645px;top:557px;width:57px;height:27px;line-height:27px;color:#3d66a8">6.30</div>
<div class="t" style="left:703px;top:557px;width:72px;height:27px;line-height:27px;color:#333">14.04</div>
<div class="t" style="left:776px;top:557px;width:37px;height:27px;line-height:27px;color:#008000">负</div>
<div class="t" style="left:814px;top:557px;width:38px;height:27px;line-height:27px;color:#ff0000">赢</div>
<div class="t" style="left:853px;top:557px;width:54px;height:27px;line-height:27px;color:#008000">小</div>
<div class="r" style="left:1px;top:583px;width:55px;height:27px;background:#003300;"></div>
<div class="t" style="left:1px;top:585px;width:55px;height:27px;line-height:27px;color:#fff">智利甲</div>
<div class="t" style="left:57px;top:585px;width:73px;height:27px;line-height:27px;color:#333">24-05-14</div>
<div class="t" style="left:131px;top:585px;width:91px;height:27px;line-height:27px;"><span style="color:#008000;-webkit-text-stroke:0.2px #008000">尤尼昂</span></div>
<div class="t" style="left:223px;top:585px;width:86px;height:27px;line-height:27px;color:#333"><span style="color:#ff0000">1-3</span>(1-1)</div>
<div class="t" style="left:310px;top:585px;width:38px;height:27px;line-height:27px;color:#333">1-5</div>
<div class="t" style="left:349px;top:585px;width:84px;height:27px;line-height:27px;"><span style="color:#000">智利大学</span></div>
<div class="t" style="left:434px;top:585px;width:41px;height:27px;line-height:27px;color:#333">0.99</div>
<div class="t" style="left:476px;top:585px;width:68px;height:27px;line-height:27px;color:#2a5ba8"><span style="color:#f00;position:relative;top:-1px">*</span>半球</div>
<div class="t" style="left:545px;top:585px;width:41px;height:27px;line-height:27px;color:#333">0.89</div>
<div class="t" style="left:587px;top:585px;width:57px;height:27px;line-height:27px;color:#333">4.34</div>
<div class="t" style="left:645px;top:585px;width:57px;height:27px;line-height:27px;color:#3d66a8">3.67</div>
<div class="t" style="left:703px;top:585px;width:72px;height:27px;line-height:27px;color:#333">1.71</div>
<div class="t" style="left:776px;top:585px;width:37px;height:27px;line-height:27px;color:#008000">负</div>
<div class="t" style="left:814px;top:585px;width:38px;height:27px;line-height:27px;color:#008000">输</div>
<div class="t" style="left:853px;top:585px;width:54px;height:27px;line-height:27px;color:#ff0000">大</div>
<div class="r" style="left:1px;top:611px;width:55px;height:27px;background:#cc9933;"></div>
<div class="t" style="left:1px;top:613px;width:55px;height:27px;line-height:27px;color:#fff">南球杯</div>
<div class="t" style="left:57px;top:613px;width:73px;height:27px;line-height:27px;color:#333">24-05-10</div>
<div class="t" style="left:131px;top:613px;width:91px;height:27px;line-height:27px;"><span style="color:#000">基多天主</span></div>
<div class="t" style="left:223px;top:613px;width:86px;height:27px;line-height:27px;color:#333"><span style="color:#ff0000">4-0</span>(2-0)</div>
<div class="t" style="left:310px;top:613px;width:38px;height:27px;line-height:27px;color:#333">8-2</div>
<div class="t" style="left:349px;top:613px;width:84px;height:27px;line-height:27px;"><span style="color:#008000;-webkit-text-stroke:0.2px #008000">尤尼昂</span></div>
<div class="t" style="left:434px;top:613px;width:41px;height:27px;line-height:27px;color:#333">0.99</div>
<div class="t" style="left:476px;top:613px;width:68px;height:27px;line-height:27px;color:#2a5ba8">两球</div>
<div class="t" style="left:545px;top:613px;width:41px;height:27px;line-height:27px;color:#333">0.87</div>
<div class="t" style="left:587px;top:613px;width:57px;height:27px;line-height:27px;color:#333">1.23</div>
<div class="t" style="left:645px;top:613px;width:57px;height:27px;line-height:27px;color:#3d66a8">5.73</div>
<div class="t" style="left:703px;top:613px;width:72px;height:27px;line-height:27px;color:#333">11.40</div>
<div class="t" style="left:776px;top:613px;width:37px;height:27px;line-height:27px;color:#008000">负</div>
<div class="t" style="left:814px;top:613px;width:38px;height:27px;line-height:27px;color:#008000">输</div>
<div class="t" style="left:853px;top:613px;width:54px;height:27px;line-height:27px;color:#ff0000">大</div>
<div class="r" style="left:1px;top:639px;width:55px;height:27px;background:#003300;"></div>
<div class="t" style="left:1px;top:641px;width:55px;height:27px;line-height:27px;color:#fff">智利甲</div>
<div class="t" style="left:57px;top:641px;width:73px;height:27px;line-height:27px;color:#333">24-05-06</div>
<div class="t" style="left:131px;top:641px;width:91px;height:27px;line-height:27px;"><span style="color:#008000;-webkit-text-stroke:0.2px #008000">尤尼昂</span></div>
<div class="t" style="left:223px;top:641px;width:86px;height:27px;line-height:27px;color:#333"><span style="color:#ff0000">2-1</span>(0-0)</div>
<div class="t" style="left:310px;top:641px;width:38px;height:27px;line-height:27px;color:#333">2-7</div>
<div class="t" style="left:349px;top:641px;width:84px;height:27px;line-height:27px;"><span style="color:#000">奴伯伦斯<span class="bd">1</span></span></div>
<div class="t" style="left:434px;top:641px;width:41px;height:27px;line-height:27px;color:#333">0.85</div>
<div class="t" style="left:476px;top:641px;width:68px;height:27px;line-height:27px;color:#2a5ba8">平手</div>
<div class="t" style="left:545px;top:641px;width:41px;height:27px;line-height:27px;color:#333">1.03</div>
<div class="t" style="left:587px;top:641px;width:57px;height:27px;line-height:27px;color:#333">2.45</div>
<div class="t" style="left:645px;top:641px;width:57px;height:27px;line-height:27px;color:#3d66a8">3.11</div>
<div class="t" style="left:703px;top:641px;width:72px;height:27px;line-height:27px;color:#333">2.77</div>
<div class="t" style="left:776px;top:641px;width:37px;height:27px;line-height:27px;color:#ff0000">胜</div>
<div class="t" style="left:814px;top:641px;width:38px;height:27px;line-height:27px;color:#ff0000">赢</div>
<div class="t" style="left:853px;top:641px;width:54px;height:27px;line-height:27px;color:#ff0000">大</div>
<div class="r" style="left:1px;top:667px;width:55px;height:27px;background:#003300;"></div>
<div class="t" style="left:1px;top:669px;width:55px;height:27px;line-height:27px;color:#fff">智利甲</div>
<div class="t" style="left:57px;top:669px;width:73px;height:27px;line-height:27px;color:#333">24-04-29</div>
<div class="t" style="left:131px;top:669px;width:91px;height:27px;line-height:27px;"><span style="color:#000">科洛科洛</span></div>
<div class="t" style="left:223px;top:669px;width:86px;height:27px;line-height:27px;color:#333"><span style="color:#ff0000">3-1</span>(1-1)</div>
<div class="t" style="left:310px;top:669px;width:38px;height:27px;line-height:27px;color:#333">8-2</div>
<div class="t" style="left:349px;top:669px;width:84px;height:27px;line-height:27px;"><span style="color:#008000;-webkit-text-stroke:0.2px #008000">尤尼昂</span></div>
<div class="t" style="left:434px;top:669px;width:41px;height:27px;line-height:27px;color:#333">0.90</div>
<div class="t" style="left:476px;top:669px;width:68px;height:27px;line-height:27px;color:#2a5ba8">一球</div>
<div class="t" style="left:545px;top:669px;width:41px;height:27px;line-height:27px;color:#333">0.98</div>
<div class="t" style="left:587px;top:669px;width:57px;height:27px;line-height:27px;color:#333">1.44</div>
<div class="t" style="left:645px;top:669px;width:57px;height:27px;line-height:27px;color:#3d66a8">4.22</div>
<div class="t" style="left:703px;top:669px;width:72px;height:27px;line-height:27px;color:#333">6.43</div>
<div class="t" style="left:776px;top:669px;width:37px;height:27px;line-height:27px;color:#008000">负</div>
<div class="t" style="left:814px;top:669px;width:38px;height:27px;line-height:27px;color:#008000">输</div>
<div class="t" style="left:853px;top:669px;width:54px;height:27px;line-height:27px;color:#ff0000">大</div>
<div class="r" style="left:1px;top:695px;width:55px;height:27px;background:#cc9933;"></div>
<div class="t" style="left:1px;top:697px;width:55px;height:27px;line-height:27px;color:#fff">南球杯</div>
<div class="t" style="left:57px;top:697px;width:73px;height:27px;line-height:27px;color:#333">24-04-24</div>
<div class="t" style="left:131px;top:697px;width:91px;height:27px;line-height:27px;"><span style="color:#008000;-webkit-text-stroke:0.2px #008000">尤尼昂 (中)</span></div>
<div class="t" style="left:223px;top:697px;width:86px;height:27px;line-height:27px;color:#333"><span style="color:#ff0000">0-0</span>(0-0)</div>
<div class="t" style="left:310px;top:697px;width:38px;height:27px;line-height:27px;color:#333">6-5</div>
<div class="t" style="left:349px;top:697px;width:84px;height:27px;line-height:27px;"><span style="color:#000">克鲁塞罗</span></div>
<div class="t" style="left:434px;top:697px;width:41px;height:27px;line-height:27px;color:#333">0.99</div>
<div class="t" style="left:476px;top:697px;width:68px;height:27px;line-height:27px;color:#2a5ba8"><span style="color:#f00;position:relative;top:-1px">*</span>半球</div>
<div class="t" style="left:545px;top:697px;width:41px;height:27px;line-height:27px;color:#333">0.87</div>
<div class="t" style="left:587px;top:697px;width:57px;height:27px;line-height:27px;color:#333">3.95</div>
<div class="t" style="left:645px;top:697px;width:57px;height:27px;line-height:27px;color:#3d66a8">3.29</div>
<div class="t" style="left:703px;top:697px;width:72px;height:27px;line-height:27px;color:#333">1.92</div>
<div class="t" style="left:776px;top:697px;width:37px;height:27px;line-height:27px;color:#0000ff">平</div>
<div class="t" style="left:814px;top:697px;width:38px;height:27px;line-height:27px;color:#ff0000">赢</div>
<div class="t" style="left:853px;top:697px;width:54px;height:27px;line-height:27px;color:#008000">小</div>
<div class="r" style="left:1px;top:723px;width:55px;height:27px;background:#003300;"></div>
<div class="t" style="left:1px;top:725px;width:55px;height:27px;line-height:27px;color:#fff">智利甲</div>
<div class="t" style="left:57px;top:725px;width:73px;height:27px;line-height:27px;color:#333">24-04-20</div>
<div class="t" style="left:131px;top:725px;width:91px;height:27px;line-height:27px;"><span style="color:#008000;-webkit-text-stroke:0.2px #008000">尤尼昂</span></div>
<div class="t" style="left:223px;top:725px;width:86px;height:27px;line-height:27px;color:#333"><span style="color:#ff0000">0-1</span>(0-0)</div>
<div class="t" style="left:310px;top:725px;width:38px;height:27px;line-height:27px;color:#333">6-2</div>
<div class="t" style="left:349px;top:725px;width:84px;height:27px;line-height:27px;"><span style="color:#000">维尼亚德</span></div>
<div class="t" style="left:434px;top:725px;width:41px;height:27px;line-height:27px;color:#333">0.88</div>
<div class="t" style="left:476px;top:725px;width:68px;height:27px;line-height:27px;color:#2a5ba8"><span style="color:#f00;position:relative;top:-1px">*</span>平/半</div>
<div class="t" style="left:545px;top:725px;width:41px;height:27px;line-height:27px;color:#333">1.02</div>
<div class="t" style="left:587px;top:725px;width:57px;height:27px;line-height:27px;color:#333">2.94</div>
<div class="t" style="left:645px;top:725px;width:57px;height:27px;line-height:27px;color:#3d66a8">3.25</div>
<div class="t" style="left:703px;top:725px;width:72px;height:27px;line-height:27px;color:#333">2.27</div>
<div class="t" style="left:776px;top:725px;width:37px;height:27px;line-height:27px;color:#008000">负</div>
<div class="t" style="left:814px;top:725px;width:38px;height:27px;line-height:27px;color:#008000">输</div>
<div class="t" style="left:853px;top:725px;width:54px;height:27px;line-height:27px;color:#008000">小</div>
<div class="t" style="left:-1px;top:752px;width:907px;height:27px;line-height:27px;color:#222">近<span style="color:#f00">10</span>场,胜1平1负8, 胜率:<span class="bx" style="background:#008000;margin-left:2px">10%</span> 赢率:<span class="bx" style="background:#008000;margin-left:2px">30%</span> 大:<span style="color:#00f">60%</span> 单率:<span style="color:#00f">60%</span></div>
<div class="r" style="left:0px;top:778px;width:907px;height:25px;background:#1b95d6;"></div>
<div class="t" style="left:0px;top:781px;width:907px;height:25px;line-height:25px;color:#fff;font-weight:bold;font-size:14px;-webkit-text-stroke:0">联赛盘路走势</div>
</body></html>
